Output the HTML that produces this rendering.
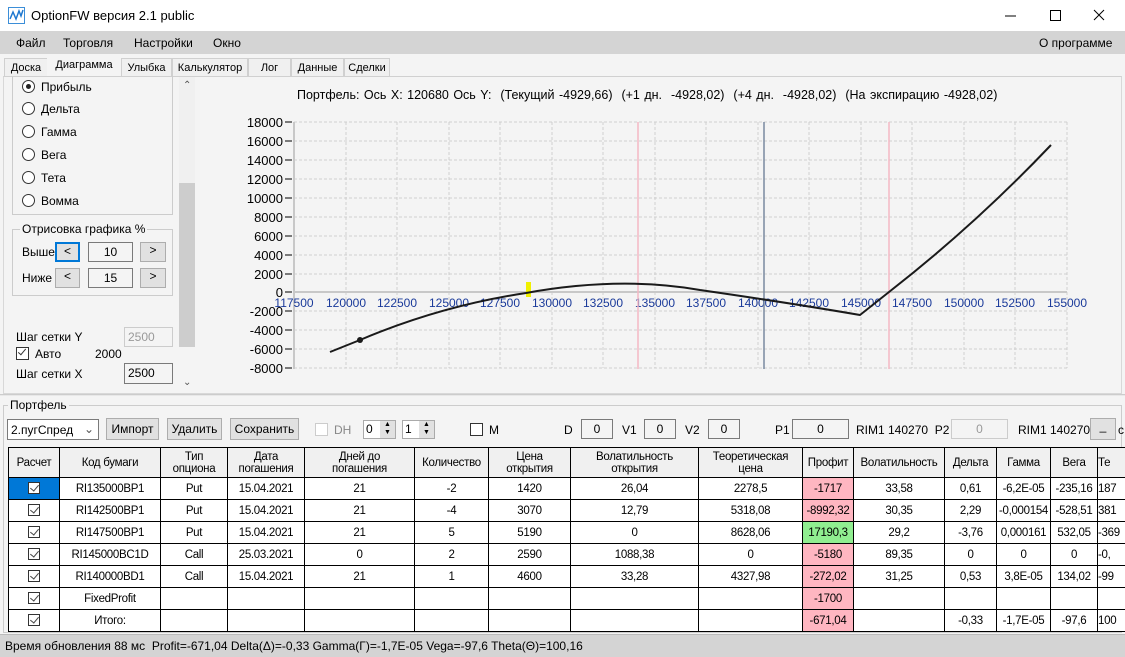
<!DOCTYPE html>
<html><head><meta charset="utf-8">
<style>
*{box-sizing:border-box;margin:0;padding:0}
body{width:1125px;height:657px;overflow:hidden;background:#f4f4f4;font-family:"Liberation Sans",sans-serif;font-size:12px;color:#000;position:relative}
.a{position:absolute}
.title{left:0;top:0;width:1125px;height:31px;background:#fff}
.menu{left:0;top:31px;width:1125px;height:23px;background:#d4d4d4}
.menu span{position:absolute;top:5px;font-size:12px}
.tab{position:absolute;top:58px;height:18px;border:1px solid #d0d0d0;border-bottom:none;background:#f0f0f0;font-size:11px;padding:3px 0 0 0;text-align:center;white-space:nowrap;overflow:hidden}
.radio{position:absolute;left:22px;width:13px;height:13px;border:1px solid #333;border-radius:50%;background:#fff}
.lbl{position:absolute;font-size:12px}
.btn{position:absolute;background:#e1e1e1;border:1px solid #adadad;text-align:center;font-size:12px}
.inp{position:absolute;background:#f4f4f4;border:1px solid #7a7a7a;text-align:center;font-size:12px}
.tw{position:absolute;left:8px;top:447px;width:1117px;height:186px;overflow:hidden}
table{border-collapse:collapse;font-size:11.5px;letter-spacing:-0.3px;table-layout:fixed;background:#fff;width:1129px}
td,th{border:1px solid #000;text-align:center;height:22px;white-space:nowrap;overflow:hidden;font-weight:normal}
th{background:#f0f0f0;height:30px;line-height:12px}
.cb{display:inline-block;width:12px;height:12px;border:1px solid #333;background:#fff;position:relative;vertical-align:middle}
.cb:after{content:"";position:absolute;left:3px;top:0px;width:4px;height:7px;border:solid #444;border-width:0 1px 1px 0;transform:rotate(40deg)}
.pk{background:#ffb6c1}.gr{background:#90ee90}
</style></head><body>
<div class="a title"></div>
<svg class="a" style="left:8px;top:7px" width="17" height="17"><rect x="0.5" y="0.5" width="16" height="16" fill="none" stroke="#3b8ed8"/><path d="M2 12 L5 5 L8 12 L11 4 L13 9 L15 3" stroke="#1e78d0" stroke-width="1.5" fill="none"/></svg>
<div class="a" style="left:31px;top:8px;font-size:13px">OptionFW версия 2.1 public</div>
<svg class="a" style="left:1000px;top:8px" width="110" height="16"><line x1="5" y1="8" x2="16" y2="8" stroke="#000"/><rect x="50.5" y="2.5" width="10" height="10" fill="none" stroke="#000"/><path d="M94 2 L104 12 M104 2 L94 12" stroke="#000"/></svg>
<div class="a menu"><span style="left:16px">Файл</span><span style="left:63px">Торговля</span><span style="left:134px">Настройки</span><span style="left:213px">Окно</span><span style="left:1039px">О программе</span></div>
<div class="tab" style="left:4px;width:44px">Доска</div>
<div class="tab" style="left:47px;width:74px;top:55px;height:22px;background:#f4f4f4;border-color:#f4f4f4">Диаграмма</div>
<div class="tab" style="left:121px;width:51px">Улыбка</div>
<div class="tab" style="left:172px;width:76px">Калькулятор</div>
<div class="tab" style="left:248px;width:43px">Лог</div>
<div class="tab" style="left:291px;width:53px">Данные</div>
<div class="tab" style="left:344px;width:46px">Сделки</div>
<div class="a" style="left:3px;top:76px;width:1119px;height:318px;border:1px solid #d8d8d8;border-top:1px solid #d0d0d0"></div>
<!-- left panel -->
<div class="a" style="left:12px;top:76px;width:161px;height:139px;border:1px solid #ccc;border-top:none"></div>
<div class="radio" style="top:80px"><div style="position:absolute;left:3px;top:3px;width:5px;height:5px;border-radius:50%;background:#222"></div></div><div class="lbl" style="left:41px;top:80px">Прибыль</div>
<div class="radio" style="top:102px"></div><div class="lbl" style="left:41px;top:102px">Дельта</div>
<div class="radio" style="top:125px"></div><div class="lbl" style="left:41px;top:125px">Гамма</div>
<div class="radio" style="top:148px"></div><div class="lbl" style="left:41px;top:148px">Вега</div>
<div class="radio" style="top:171px"></div><div class="lbl" style="left:41px;top:171px">Тета</div>
<div class="radio" style="top:194px"></div><div class="lbl" style="left:41px;top:194px">Вомма</div>
<div class="a" style="left:179px;top:77px;width:16px;height:270px;background:#f0f0f0"></div>
<div class="a" style="left:179px;top:183px;width:16px;height:164px;background:#cdcdcd"></div>
<div class="a" style="left:183px;top:80px;font-size:10px;color:#555">&#8963;</div>
<div class="a" style="left:183px;top:377px;font-size:10px;color:#555">&#8964;</div>
<div class="a" style="left:12px;top:229px;width:161px;height:67px;border:1px solid #ccc"></div>
<div class="lbl" style="left:20px;top:222px;background:#f4f4f4;padding:0 2px">Отрисовка графика %</div>
<div class="lbl" style="left:22px;top:245px">Выше</div>
<div class="btn" style="left:55px;top:242px;width:25px;height:20px;border:2px solid #0078d7">&lt;</div>
<div class="inp" style="left:88px;top:242px;width:45px;height:20px;padding-top:2px">10</div>
<div class="btn" style="left:140px;top:242px;width:26px;height:20px">&gt;</div>
<div class="lbl" style="left:22px;top:271px">Ниже</div>
<div class="btn" style="left:55px;top:268px;width:25px;height:20px">&lt;</div>
<div class="inp" style="left:88px;top:268px;width:45px;height:20px;padding-top:2px">15</div>
<div class="btn" style="left:140px;top:268px;width:26px;height:20px">&gt;</div>
<div class="lbl" style="left:16px;top:330px">Шаг сетки Y</div>
<div class="inp" style="left:124px;top:327px;width:49px;height:20px;border-color:#ccc;color:#999;text-align:left;padding:2px 3px">2500</div>
<div class="a" style="left:16px;top:347px;width:13px;height:13px;border:1px solid #333;background:#fff"></div><div class="a" style="left:20px;top:347px;width:4px;height:8px;border:solid #333;border-width:0 1px 1px 0;transform:rotate(40deg)"></div>
<div class="lbl" style="left:35px;top:347px">Авто</div><div class="lbl" style="left:95px;top:347px">2000</div>
<div class="lbl" style="left:16px;top:367px">Шаг сетки X</div>
<div class="inp" style="left:124px;top:363px;width:49px;height:21px;text-align:left;padding:2px 3px">2500</div>
<!-- chart -->
<div class="a" style="left:297px;top:88px;font-size:12.5px;word-spacing:1px">Портфель: Ось X: 120680 Ось Y: &nbsp;(Текущий -4929,66) &nbsp;(+1 дн. &nbsp;-4928,02) &nbsp;(+4 дн. &nbsp;-4928,02) &nbsp;(На экспирацию -4928,02)</div>
<svg class="a" style="left:0;top:0" width="1125" height="400" font-family="Liberation Sans" font-size="12">
<g stroke="#cfcfcf" stroke-dasharray="3,2">
<line x1="294" y1="122" x2="1067" y2="122"/><line x1="294" y1="141" x2="1067" y2="141"/><line x1="294" y1="160" x2="1067" y2="160"/><line x1="294" y1="179" x2="1067" y2="179"/><line x1="294" y1="198" x2="1067" y2="198"/><line x1="294" y1="217" x2="1067" y2="217"/><line x1="294" y1="236" x2="1067" y2="236"/><line x1="294" y1="255" x2="1067" y2="255"/><line x1="294" y1="274" x2="1067" y2="274"/><line x1="294" y1="311" x2="1067" y2="311"/><line x1="294" y1="330" x2="1067" y2="330"/><line x1="294" y1="349" x2="1067" y2="349"/><line x1="294" y1="368" x2="1067" y2="368"/>
<line x1="346" y1="122" x2="346" y2="368"/><line x1="397" y1="122" x2="397" y2="368"/><line x1="449" y1="122" x2="449" y2="368"/><line x1="500" y1="122" x2="500" y2="368"/><line x1="552" y1="122" x2="552" y2="368"/><line x1="603" y1="122" x2="603" y2="368"/><line x1="655" y1="122" x2="655" y2="368"/><line x1="706" y1="122" x2="706" y2="368"/><line x1="758" y1="122" x2="758" y2="368"/><line x1="809" y1="122" x2="809" y2="368"/><line x1="861" y1="122" x2="861" y2="368"/><line x1="912" y1="122" x2="912" y2="368"/><line x1="964" y1="122" x2="964" y2="368"/><line x1="1015" y1="122" x2="1015" y2="368"/><line x1="1067" y1="122" x2="1067" y2="368"/>
</g>
<line x1="294" y1="122" x2="294" y2="369" stroke="#c8c8c8" stroke-width="2"/>
<line x1="294" y1="292" x2="1067" y2="292" stroke="#c8c8c8" stroke-width="2"/>
<g stroke="#000"><line x1="285" y1="122" x2="292" y2="122"/><line x1="285" y1="141" x2="292" y2="141"/><line x1="285" y1="160" x2="292" y2="160"/><line x1="285" y1="179" x2="292" y2="179"/><line x1="285" y1="198" x2="292" y2="198"/><line x1="285" y1="217" x2="292" y2="217"/><line x1="285" y1="236" x2="292" y2="236"/><line x1="285" y1="255" x2="292" y2="255"/><line x1="285" y1="274" x2="292" y2="274"/><line x1="285" y1="292" x2="292" y2="292"/><line x1="285" y1="311" x2="292" y2="311"/><line x1="285" y1="330" x2="292" y2="330"/><line x1="285" y1="349" x2="292" y2="349"/><line x1="285" y1="368" x2="292" y2="368"/></g>
<g text-anchor="end" fill="#000" font-size="13"><text x="283" y="127">18000</text><text x="283" y="146">16000</text><text x="283" y="165">14000</text><text x="283" y="184">12000</text><text x="283" y="203">10000</text><text x="283" y="222">8000</text><text x="283" y="241">6000</text><text x="283" y="260">4000</text><text x="283" y="279">2000</text><text x="283" y="297">0</text><text x="283" y="316">-2000</text><text x="283" y="335">-4000</text><text x="283" y="354">-6000</text><text x="283" y="373">-8000</text></g>
<g text-anchor="middle" fill="#1a3a9a" font-size="12"><text x="294" y="307">117500</text><text x="346" y="307">120000</text><text x="397" y="307">122500</text><text x="449" y="307">125000</text><text x="500" y="307">127500</text><text x="552" y="307">130000</text><text x="603" y="307">132500</text><text x="655" y="307">135000</text><text x="706" y="307">137500</text><text x="758" y="307">140000</text><text x="809" y="307">142500</text><text x="861" y="307">145000</text><text x="912" y="307">147500</text><text x="964" y="307">150000</text><text x="1015" y="307">152500</text><text x="1067" y="307">155000</text></g>
<line x1="638" y1="122" x2="638" y2="369" stroke="#f4b8c4" stroke-width="1.5"/>
<line x1="764" y1="122" x2="764" y2="369" stroke="#7a8aa0" stroke-width="1.5"/>
<line x1="889" y1="122" x2="889" y2="369" stroke="#f4b8c4" stroke-width="1.5"/>
<rect x="526" y="282" width="5" height="15" fill="#f0f000"/>
<path d="M330 352 L360 340 Q440 306 526 293 Q620 276 700 290 Q790 303 860 315 L889 292 Q975 225 1051 145" stroke="#1a1a1a" stroke-width="2" fill="none"/>
<circle cx="360" cy="340" r="3" fill="#1a1a1a"/>
</svg>
<div class="a" style="left:0;top:394px;width:1125px;height:2px;border-top:1px solid #ccc;background:#e8e8e8"></div>
<!-- portfolio -->
<div class="a" style="left:3px;top:405px;width:1119px;height:228px;border:1px solid #ccc"></div>
<div class="lbl" style="left:8px;top:398px;background:#f4f4f4;padding:0 2px">Портфель</div>
<div class="a" style="left:7px;top:419px;width:92px;height:21px;border:1px solid #7a7a7a;background:#fff;padding:3px 3px;font-size:12px">2.пугСпред<span style="position:absolute;right:4px;top:2px;color:#555">&#8964;</span></div>
<div class="btn" style="left:106px;top:418px;width:53px;height:22px;padding-top:3px">Импорт</div>
<div class="btn" style="left:167px;top:418px;width:55px;height:22px;padding-top:3px">Удалить</div>
<div class="btn" style="left:230px;top:418px;width:69px;height:22px;padding-top:3px">Сохранить</div>
<div class="a" style="left:315px;top:423px;width:13px;height:13px;border:1px solid #ccc;background:#fff"></div><div class="lbl" style="left:334px;top:423px;color:#888">DH</div>
<div class="a" style="left:363px;top:420px;width:33px;height:19px;border:1px solid #aaa;background:#fff;padding:1px 2px">0</div><div class="a" style="left:380px;top:421px;width:15px;height:17px;background:#e1e1e1;font-size:7px;line-height:8px;text-align:center">▲<br>▼</div>
<div class="a" style="left:402px;top:420px;width:33px;height:19px;border:1px solid #aaa;background:#fff;padding:1px 2px">1</div><div class="a" style="left:419px;top:421px;width:15px;height:17px;background:#e1e1e1;font-size:7px;line-height:8px;text-align:center">▲<br>▼</div>
<div class="a" style="left:470px;top:423px;width:13px;height:13px;border:1px solid #333;background:#fff"></div><div class="lbl" style="left:489px;top:423px">M</div>
<div class="lbl" style="left:564px;top:423px">D</div><div class="inp" style="left:581px;top:419px;width:32px;height:20px;padding-top:2px">0</div>
<div class="lbl" style="left:622px;top:423px">V1</div><div class="inp" style="left:644px;top:419px;width:32px;height:20px;padding-top:2px">0</div>
<div class="lbl" style="left:685px;top:423px">V2</div><div class="inp" style="left:708px;top:419px;width:32px;height:20px;padding-top:2px">0</div>
<div class="lbl" style="left:775px;top:423px">P1</div><div class="inp" style="left:792px;top:419px;width:57px;height:20px;padding-top:2px">0</div>
<div class="lbl" style="left:856px;top:423px">RIM1 140270 &nbsp;P2</div>
<div class="inp" style="left:951px;top:419px;width:57px;height:20px;padding-top:2px;border-color:#ccc;color:#999">0</div>
<div class="lbl" style="left:1018px;top:423px">RIM1 140270</div>
<div class="btn" style="left:1090px;top:418px;width:26px;height:22px">_</div><div class="lbl" style="left:1118px;top:423px">c</div>
<div class="tw"><table>
<colgroup><col style="width:51px"><col style="width:101px"><col style="width:67px"><col style="width:77px"><col style="width:110px"><col style="width:74px"><col style="width:82px"><col style="width:128px"><col style="width:104px"><col style="width:51px"><col style="width:91px"><col style="width:52px"><col style="width:54px"><col style="width:47px"><col style="width:40px"></colgroup>
<tr><th>Расчет</th><th>Код бумаги</th><th>Тип<br>опциона</th><th>Дата<br>погашения</th><th>Дней до<br>погашения</th><th>Количество</th><th>Цена<br>открытия</th><th>Волатильность<br>открытия</th><th>Теоретическая<br>цена</th><th>Профит</th><th>Волатильность</th><th>Дельта</th><th>Гамма</th><th>Вега</th><th style="text-align:left">Те</th></tr>
<tr><td style="background:#0078d7"><span class="cb"></span></td><td>RI135000BP1</td><td>Put</td><td>15.04.2021</td><td>21</td><td>-2</td><td>1420</td><td>26,04</td><td>2278,5</td><td class="pk">-1717</td><td>33,58</td><td>0,61</td><td>-6,2E-05</td><td>-235,16</td><td style="text-align:left">187</td></tr>
<tr><td><span class="cb"></span></td><td>RI142500BP1</td><td>Put</td><td>15.04.2021</td><td>21</td><td>-4</td><td>3070</td><td>12,79</td><td>5318,08</td><td class="pk">-8992,32</td><td>30,35</td><td>2,29</td><td>-0,000154</td><td>-528,51</td><td style="text-align:left">381</td></tr>
<tr><td><span class="cb"></span></td><td>RI147500BP1</td><td>Put</td><td>15.04.2021</td><td>21</td><td>5</td><td>5190</td><td>0</td><td>8628,06</td><td class="gr">17190,3</td><td>29,2</td><td>-3,76</td><td>0,000161</td><td>532,05</td><td style="text-align:left">-369</td></tr>
<tr><td><span class="cb"></span></td><td>RI145000BC1D</td><td>Call</td><td>25.03.2021</td><td>0</td><td>2</td><td>2590</td><td>1088,38</td><td>0</td><td class="pk">-5180</td><td>89,35</td><td>0</td><td>0</td><td>0</td><td style="text-align:left">-0,</td></tr>
<tr><td><span class="cb"></span></td><td>RI140000BD1</td><td>Call</td><td>15.04.2021</td><td>21</td><td>1</td><td>4600</td><td>33,28</td><td>4327,98</td><td class="pk">-272,02</td><td>31,25</td><td>0,53</td><td>3,8E-05</td><td>134,02</td><td style="text-align:left">-99</td></tr>
<tr><td><span class="cb"></span></td><td>FixedProfit</td><td></td><td></td><td></td><td></td><td></td><td></td><td></td><td class="pk">-1700</td><td></td><td></td><td></td><td></td><td></td></tr>
<tr><td><span class="cb"></span></td><td>Итого:</td><td></td><td></td><td></td><td></td><td></td><td></td><td></td><td class="pk">-671,04</td><td></td><td>-0,33</td><td>-1,7E-05</td><td>-97,6</td><td style="text-align:left">100</td></tr>
</table></div>
<div class="a" style="left:0;top:634px;width:1125px;height:23px;background:#d4d4d4;border-top:1px solid #bbb;padding:4px 5px;font-size:12px">Время обновления 88 мс &nbsp;Profit=-671,04 Delta(Δ)=-0,33 Gamma(Γ)=-1,7E-05 Vega=-97,6 Theta(Θ)=100,16</div>
</body></html>
